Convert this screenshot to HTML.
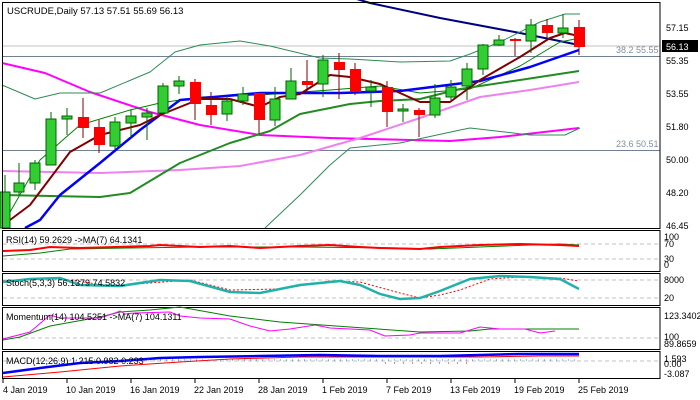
<!DOCTYPE html>
<html><head><meta charset="utf-8"><style>
html,body{margin:0;padding:0;background:#fff;}
svg{display:block;font-family:"Liberation Sans",sans-serif;font-size:9px;}
</style></head><body>
<svg width="700" height="400" viewBox="0 0 700 400" xmlns="http://www.w3.org/2000/svg">
<rect width="700" height="400" fill="#fff"/>
<!-- main panel -->
<line x1="2" y1="46" x2="660" y2="46" stroke="#c0c0c0"/>
<line x1="2" y1="56.5" x2="660" y2="56.5" stroke="#708090"/>
<line x1="2" y1="150.5" x2="660" y2="150.5" stroke="#708090"/>
<text x="616" y="53" fill="#8090a0">38.2 55.55</text>
<text x="616" y="147" fill="#8090a0">23.6 50.51</text>
<g fill="none" stroke-linejoin="round">
<polyline stroke="#000080" stroke-width="2" points="350,-3 370,3 440,18 520,33 579,45"/>
<polyline stroke="#ff00ff" stroke-width="2" points="2,63 45,73 90,92 150,112 200,125 260,135 330,138 450,141 500,137 579,128"/>
<polyline stroke="#ee82ee" stroke-width="2" points="2,171 100,173 180,170 240,166 300,155 360,138 420,118 480,97 530,90 579,82"/>
<polyline stroke="#2e8b57" stroke-width="1" points="2,85 35,99 60,93 100,93 150,72 175,52 200,45 240,41 270,46 320,58 350,59 400,62 450,61 470,54 500,42 540,22 565,14 580,14"/>
<polyline stroke="#2e8b57" stroke-width="1" points="265,228 300,195 330,165 350,148 400,143 460,130 470,128 530,135 565,135 580,128"/>
<polyline stroke="#008000" stroke-width="1" points="2,226 40,160 80,125 130,110 160,103 200,97 260,95 330,90 380,86 420,93 470,89 520,66 560,42 580,38"/>
<polyline stroke="#228b22" stroke-width="2" points="2,195 100,197 130,193 180,163 230,143 270,131 300,114 350,104 380,101 420,99 460,89 520,80 579,71"/>
<polyline stroke="#0000ff" stroke-width="2.5" points="25,228 40,220 60,195 100,163 140,130 180,100 260,93 340,93 400,91 480,81 530,67 579,50"/>
<polyline stroke="#800000" stroke-width="2" points="2,226 30,205 70,152 100,135 140,125 160,115 200,99 230,99 260,107 280,97 300,94 330,75 350,77 380,84 420,102 450,102 480,80 520,57 550,38 565,33 579,36"/>
</g>
<g stroke="#006400" stroke-width="1">
<!-- wicks -->
<line x1="5" y1="175" x2="5" y2="228"/><line x1="19" y1="163" x2="19" y2="195"/><line x1="35" y1="160" x2="35" y2="190"/><line x1="51" y1="112" x2="51" y2="165"/><line x1="67" y1="108" x2="67" y2="135"/><line x1="83" y1="98" x2="83" y2="138" stroke="#800000"/><line x1="99" y1="120" x2="99" y2="153" stroke="#800000"/><line x1="115" y1="117" x2="115" y2="149"/><line x1="131" y1="110" x2="131" y2="137"/><line x1="147" y1="108" x2="147" y2="140"/><line x1="163" y1="83" x2="163" y2="113"/><line x1="179" y1="76" x2="179" y2="94"/><line x1="195" y1="79" x2="195" y2="120" stroke="#800000"/><line x1="211" y1="92" x2="211" y2="125" stroke="#800000"/><line x1="227" y1="96" x2="227" y2="121"/><line x1="243" y1="87" x2="243" y2="105"/><line x1="259" y1="92" x2="259" y2="134" stroke="#800000"/><line x1="275" y1="87" x2="275" y2="126"/><line x1="291" y1="68" x2="291" y2="99"/><line x1="307" y1="60" x2="307" y2="93" stroke="#800000"/><line x1="323" y1="55" x2="323" y2="97"/><line x1="339" y1="53" x2="339" y2="99" stroke="#800000"/><line x1="355" y1="63" x2="355" y2="95" stroke="#800000"/><line x1="371" y1="80" x2="371" y2="107"/><line x1="387" y1="81" x2="387" y2="127" stroke="#800000"/><line x1="403" y1="104" x2="403" y2="122"/><line x1="419" y1="108" x2="419" y2="137" stroke="#800000"/><line x1="435" y1="84" x2="435" y2="118"/><line x1="451" y1="80" x2="451" y2="100"/><line x1="467" y1="63" x2="467" y2="100"/><line x1="483" y1="44" x2="483" y2="75"/><line x1="499" y1="35" x2="499" y2="46"/><line x1="515" y1="38" x2="515" y2="56" stroke="#800000"/><line x1="531" y1="19" x2="531" y2="53"/><line x1="547" y1="19" x2="547" y2="38" stroke="#800000"/><line x1="563" y1="14" x2="563" y2="38"/><line x1="579" y1="20" x2="579" y2="55" stroke="#800000"/>
</g>
<g stroke="#006400" stroke-width="1" fill="#32cd32">
<rect x="0" y="192" width="10" height="36"/><rect x="14" y="183" width="10" height="9"/><rect x="30" y="163" width="10" height="20"/><rect x="46" y="119" width="10" height="46"/><rect x="62" y="116" width="10" height="3"/><rect x="110" y="122" width="10" height="24"/><rect x="126" y="116" width="10" height="7"/><rect x="142" y="113" width="10" height="4"/><rect x="158" y="86" width="10" height="27"/><rect x="174" y="81" width="10" height="5"/><rect x="222" y="101" width="10" height="13"/><rect x="238" y="94" width="10" height="7"/><rect x="270" y="99" width="10" height="21"/><rect x="286" y="81" width="10" height="18"/><rect x="318" y="60" width="10" height="24"/><rect x="366" y="87" width="10" height="4"/><rect x="398" y="109" width="10" height="2"/><rect x="430" y="98" width="10" height="17"/><rect x="446" y="87" width="10" height="10"/><rect x="462" y="69" width="10" height="17"/><rect x="478" y="45" width="10" height="24"/><rect x="494" y="40" width="10" height="5"/><rect x="526" y="25" width="10" height="16"/><rect x="558" y="28" width="10" height="5"/>
</g>
<g stroke="#800000" stroke-width="0" fill="#ff0000">
<rect x="78" y="117" width="11" height="11"/><rect x="94" y="127" width="11" height="18"/><rect x="190" y="82" width="11" height="22"/><rect x="206" y="105" width="11" height="10"/><rect x="254" y="93" width="11" height="27"/><rect x="302" y="81" width="11" height="4"/><rect x="334" y="62" width="11" height="8"/><rect x="350" y="69" width="11" height="23"/><rect x="382" y="87" width="11" height="25"/><rect x="414" y="110" width="11" height="5"/><rect x="510" y="39" width="11" height="2"/><rect x="542" y="25" width="11" height="8"/><rect x="574" y="27" width="11" height="20"/>
</g>
<rect x="2.5" y="2.5" width="657.5" height="226" fill="none" stroke="#000"/>
<text x="7" y="14" fill="#000" font-size="9.5">USCRUDE,Daily  57.13 57.51 55.69 56.13</text>
<g fill="#000"><text x="666" y="31">57.15</text><text x="666" y="64">55.35</text><text x="666" y="97">53.55</text><text x="666" y="130">51.80</text><text x="666" y="163">50.00</text><text x="666" y="196">48.20</text><text x="666" y="229">46.45</text></g>
<rect x="662" y="40" width="36" height="12" fill="#000"/><text x="666" y="50" fill="#fff">56.13</text>

<!-- RSI -->
<rect x="2.5" y="230.5" width="657.5" height="41" fill="none" stroke="#000"/>
<line x1="3" y1="244" x2="660" y2="244" stroke="#c0c0c0" stroke-dasharray="4,3"/>
<line x1="3" y1="259" x2="660" y2="259" stroke="#c0c0c0" stroke-dasharray="4,3"/>
<polyline fill="none" stroke="#008000" points="3,256 40,253 70,249 130,248 200,247 300,247 400,248 430,249 480,247 530,245 560,244 579,245"/>
<polyline fill="none" stroke="#ff0000" stroke-width="2" points="3,251 30,250 50,247 80,248 150,246 160,245 200,247 230,246 260,248 300,246 330,245 360,247 380,248 420,249 440,247 480,245 520,244 560,245 579,246"/>
<text x="6" y="243" fill="#000">RSI(14) 59.2629  -&gt;MA(7) 64.1341</text>
<g fill="#000"><text x="664" y="240">100</text><text x="664" y="247">70</text><text x="664" y="262">30</text><text x="664" y="268">0</text></g>

<!-- Stoch -->
<rect x="2.5" y="273.5" width="657.5" height="32" fill="none" stroke="#000"/>
<line x1="3" y1="280" x2="660" y2="280" stroke="#c0c0c0" stroke-dasharray="4,3"/>
<line x1="3" y1="298" x2="660" y2="298" stroke="#c0c0c0" stroke-dasharray="4,3"/>
<polyline fill="none" stroke="#ff0000" stroke-dasharray="2,2" points="3,281 40,278 70,280 110,286 150,283 190,280 230,290 280,289 330,281 360,282 400,293 420,298 440,295 460,290 490,279 520,277 560,278 579,281"/>
<polyline fill="none" stroke="#20b2aa" stroke-width="2.5" points="3,282 30,279 60,278 80,285 120,286 160,280 190,281 230,292 260,293 300,285 340,281 360,285 380,294 400,299 420,298 440,291 470,279 500,276 530,277 560,279 579,289"/>
<text x="6" y="286" fill="#000">Stoch(5,3,3) 56.1379 74.5832</text>
<g fill="#000"><text x="664" y="283">8000</text><text x="664" y="301">20</text></g>

<!-- Momentum -->
<rect x="2.5" y="307.5" width="657.5" height="42" fill="none" stroke="#000"/>
<line x1="3" y1="338" x2="660" y2="338" stroke="#c0c0c0" stroke-dasharray="4,3"/>
<polyline fill="none" stroke="#008000" points="3,340 20,337 50,326 100,317 120,312 150,310 180,307 230,316 280,322 350,327 420,332 470,331 490,329 579,329"/>
<polyline fill="none" stroke="#ff00ff" points="3,339 30,332 50,315 60,318 100,318 115,313 120,311 125,314 135,313 170,312 180,316 200,318 230,319 250,326 270,331 290,329 315,325 330,328 370,330 385,336 410,335 420,333 460,333 480,327 500,329 525,329 540,333 555,331"/>
<text x="6" y="320" fill="#000">Momentum(14) 104.5251  -&gt;MA(7) 104.1311</text>
<g fill="#000"><text x="664" y="319">123.3402</text><text x="664" y="340">100</text><text x="664" y="347">89.8659</text></g>

<!-- MACD -->
<rect x="2.5" y="351.5" width="657.5" height="27" fill="none" stroke="#000"/>
<line x1="3" y1="361" x2="660" y2="361" stroke="#c0c0c0" stroke-dasharray="4,3"/>
<polyline fill="none" stroke="#ff0000" points="3,377 60,372 120,366 180,362 230,359 300,357 380,357 440,357 480,357 540,356 579,356"/>
<polyline fill="none" stroke="#0000ff" stroke-width="2.5" points="3,373 40,368 80,363 120,361 160,358 200,357 260,356 320,355 380,356 440,356 480,355 520,354 579,354"/>
<g stroke="#1e90ff" stroke-dasharray="1,5"><line x1="40" y1="360" x2="579" y2="360"/></g>
<g stroke="#ff0000" stroke-dasharray="1,8"><line x1="385" y1="363" x2="470" y2="363"/></g>
<text x="6" y="364" fill="#000">MACD(12,26,9) 1.215 0.982 0.233</text>
<g fill="#000"><text x="664" y="362">1.593</text><text x="664" y="367">0.00</text><text x="664" y="377">-3.087</text></g>

<!-- dates -->
<g stroke="#000"><line x1="3" y1="379" x2="3" y2="383"/><line x1="67" y1="379" x2="67" y2="383"/><line x1="131" y1="379" x2="131" y2="383"/><line x1="195" y1="379" x2="195" y2="383"/><line x1="259" y1="379" x2="259" y2="383"/><line x1="323" y1="379" x2="323" y2="383"/><line x1="387" y1="379" x2="387" y2="383"/><line x1="451" y1="379" x2="451" y2="383"/><line x1="515" y1="379" x2="515" y2="383"/><line x1="579" y1="379" x2="579" y2="383"/></g>
<g fill="#000"><text x="3" y="393">4 Jan 2019</text><text x="66" y="393">10 Jan 2019</text><text x="130" y="393">16 Jan 2019</text><text x="194" y="393">22 Jan 2019</text><text x="258" y="393">28 Jan 2019</text><text x="322" y="393">1 Feb 2019</text><text x="386" y="393">7 Feb 2019</text><text x="450" y="393">13 Feb 2019</text><text x="514" y="393">19 Feb 2019</text><text x="578" y="393">25 Feb 2019</text></g>
</svg>
</body></html>
